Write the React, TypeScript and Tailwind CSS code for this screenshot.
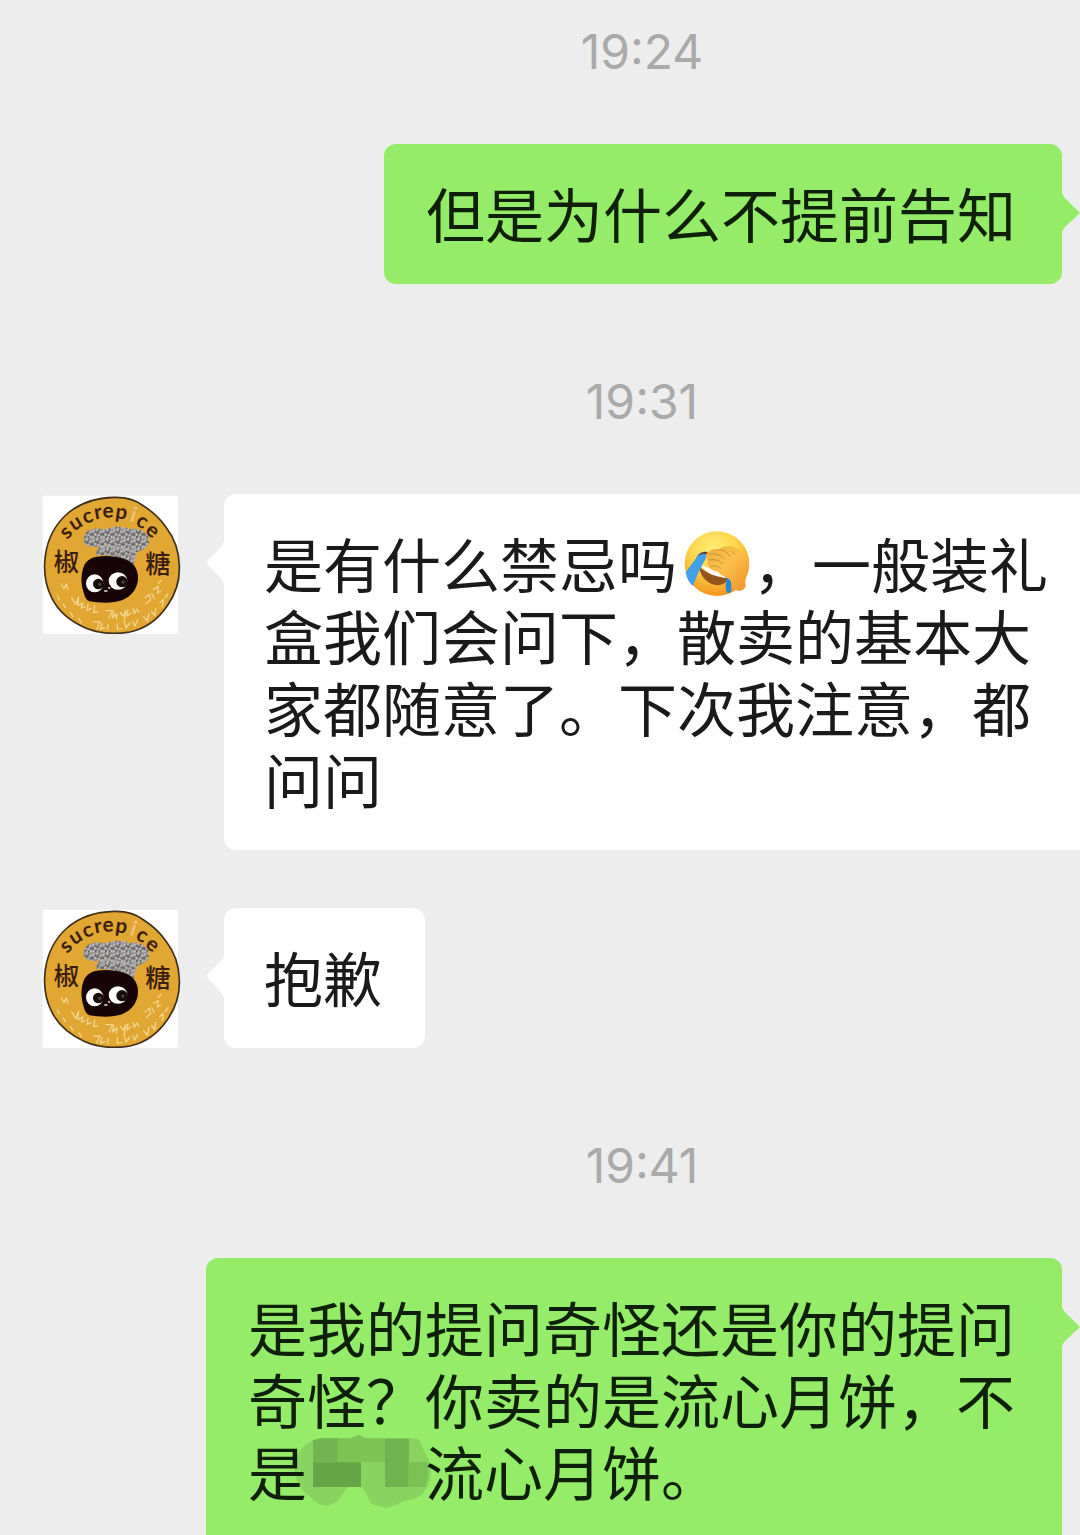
import type { ReactNode } from "react";
import clsx from "clsx";

const ringLetters = [
  { char: "s", x: 104, y: 150, rotate: -42 },
  { char: "u", x: 134, y: 122, rotate: -32 },
  { char: "c", x: 171, y: 102, rotate: -20 },
  { char: "r", x: 203, y: 90, rotate: -10 },
  { char: "e", x: 234, y: 86, rotate: -2 },
  { char: "p", x: 275, y: 90, rotate: 8 },
  { char: "i", x: 312, y: 98, rotate: 18, light: true },
  { char: "c", x: 339, y: 117, rotate: 30 },
  { char: "e", x: 371, y: 145, rotate: 40 },
];

const Avatar = () => (
  <svg viewBox="36 39 420 420" role="img" aria-label="sucrepice 椒糖" className="size-[140px] shrink-0">
    <defs>
      <pattern id="speckle" width="31" height="29" patternUnits="userSpaceOnUse">
        <rect width="31" height="29" fill="#918f8e" />
        <path
          d="M1 2h6v5H1zM12 0h5v4h-5zM23 5h6v5h-6zM7 12h5v6H7zM17 15h7v4h-7zM2 22h5v5H2zM25 21h5v6h-5zM14 23h4v5h-4z"
          fill="#d2d1d3"
        />
        <path
          d="M8 5h5v5H8zM19 2h4v5h-4zM0 13h5v5H0zM14 9h5v5h-5zM25 13h5v5h-5zM9 20h4v6H9zM20 22h4v5h-4z"
          fill="#565254"
        />
      </pattern>
    </defs>
    <rect x="38" y="44" width="406" height="414" rx="6" fill="#fff" />
    <path
      d="M252 49C290 48 318 56 341 75C366 91 388 110 407 137C433 170 447 210 448 254C450 299 437 338 413 373C388 410 349 443 300 453C255 461 208 458 165 440C120 420 85 390 66 352C44 310 40 268 46 224C53 173 75 131 111 99C152 63 200 50 252 49Z"
      fill="#e2a632"
      stroke="#40301b"
      strokeWidth="5"
    />

    {ringLetters.map((letter) => (
      <text
        key={letter.x}
        transform={`translate(${letter.x} ${letter.y}) rotate(${letter.rotate})`}
        textAnchor="middle"
        dominantBaseline="central"
        className={clsx("font-['Lato',sans-serif] text-[62px] font-bold", letter.light ? "fill-[#f3c27c]" : "fill-[#3a200c]")}
      >
        {letter.char}
      </text>
    ))}

    {/* Chef hat */}
    <path
      d="M197 222L205 196C190 201 176 198 165 190C155 172 163 152 181 147C197 138 218 145 230 144C253 134 283 137 298 144C319 138 346 149 354 165C362 183 353 201 335 208L321 213L311 250C277 230 235 220 197 222Z"
      fill="url(#speckle)"
    />
    <path d="M205 196C240 190 286 204 320 216" fill="none" stroke="#b5b1aa" strokeWidth="4" />

    {/* Face */}
    <path
      d="M181 234C204 221 250 224 282 233C307 241 323 260 324 286C326 318 306 347 276 358C249 368 207 366 178 361C163 354 163 338 157 321C153 300 153 279 160 260C164 248 171 239 181 234Z"
      fill="#160406"
    />
    <ellipse cx="194" cy="307" rx="26" ry="27" fill="#fff" />
    <ellipse cx="264" cy="300" rx="28" ry="26" fill="#fff" />
    <circle cx="205" cy="309" r="16" fill="#160a0b" />
    <circle cx="276" cy="302" r="17" fill="#160a0b" />
    <circle cx="209" cy="310" r="5" fill="#4a4445" />
    <circle cx="279" cy="303" r="5" fill="#4a4445" />
    <path d="M224 330h7M236 320l3 2" stroke="#e8dddd" strokeWidth="4" strokeLinecap="round" />

    <text x="109" y="270" textAnchor="middle" className="fill-[#3a200c] font-['Noto_Sans_CJK_SC',sans-serif] text-[76px] font-medium">
      椒
    </text>
    <text x="384" y="275" textAnchor="middle" className="fill-[#3a200c] font-['Noto_Sans_CJK_SC',sans-serif] text-[76px] font-medium">
      糖
    </text>

    {/* Handwriting along the lower rim */}
    <g fill="none" stroke="#f3d68c" strokeWidth="4" strokeLinecap="round" strokeLinejoin="round">
      <path d="M94 309l8 14 7-14 5 17M125 350l12 20 9-22-3 25 13-5M158 366l-4 15 11-4M174 370l-3 18 12-6M194 375l-3 20 11-2" />
      <path d="M228 389h20l-11 22M252 393l-5 18 14-13-2 17M271 394l8 11 9-17-6 34M294 387l-3 18 12-9M309 382l4 16 7-14 7 10" />
      <path d="M345 350l13-10 4 16-14 12M365 338l8 16M370 325l15-8-3 19 10-6M384 307l10-9" />
      <path d="M82 344l6 13M100 369l6 11M122 395l7 12M147 413l7 13M190 422l20 1-10 21M216 428l-5 16 15-4M234 431v15M262 429v16l14-2M284 425l4 16 11-15M309 421l5 15 9-19" />
      <path d="M341 407l11 13 5-23M365 391l9 13 3-21M389 365l11-10-3 22M406 350l8-12" />
    </g>
  </svg>
);

const FacepalmEmoji = () => (
  <svg viewBox="40 28 210 210" role="img" aria-label="捂脸" className="mt-0.5 mr-px ml-[5px] inline-block size-[70px] align-top">
    <defs>
      <radialGradient id="face" cx="45%" cy="28%" r="72%">
        <stop offset="0" stopColor="#fff176" />
        <stop offset="0.5" stopColor="#ffd34b" />
        <stop offset="1" stopColor="#f2951d" />
      </radialGradient>
      <linearGradient id="hand" x1="0" y1="0" x2="1" y2="1">
        <stop offset="0" stopColor="#e9ae3f" />
        <stop offset="0.45" stopColor="#fbc04a" />
        <stop offset="1" stopColor="#f2932b" />
      </linearGradient>
    </defs>
    <circle cx="145" cy="132" r="97" fill="url(#face)" />
    <path d="M92 142C112 159 145 170 176 176C174 192 157 200 137 195C111 189 95 168 92 142Z" fill="#94531a" />
    <path d="M97 134C115 146 145 154 172 166L170 174C142 172 108 162 97 134Z" fill="#fff" />
    <path d="M114 96C99 94 87 103 81 117L51 158C54 176 61 190 73 199C82 176 92 149 111 118Z" fill="#42a0e9" />
    <path d="M174 171L188 184V214C183 222 174 222 173 213C170 199 171 184 174 171Z" fill="#2788d8" />
    <path d="M88 109C93 100 104 95 118 98L114 104C103 101 95 104 88 109Z" fill="#684126" />
    <path
      d="M114 104C118 92 136 86 151 89C168 76 192 76 207 88C228 99 240 119 237 146C234 165 228 183 231 198C230 210 213 217 199 211C188 204 190 190 183 179C171 172 156 167 147 156C136 155 125 149 123 141C116 136 114 127 118 121C112 116 110 109 114 104Z"
      fill="url(#hand)"
    />
    <path
      d="M122 104C139 99 156 107 166 115M122 121C138 117 151 123 161 131M126 141C139 136 149 140 156 146M152 90C168 92 177 100 183 109M192 96l6 7"
      fill="none"
      stroke="#d08d2c"
      strokeWidth="3"
      strokeLinecap="round"
    />
  </svg>
);

const MaskedWord = () => (
  <svg viewBox="228 78 354 180" aria-hidden="true" className="relative -z-10 inline-block h-[60px] w-[118px] overflow-visible align-top">
    <path
      d="M194 146C207 115 240 91 270 88H360L385 77L402 88H555C570 91 574 118 584 134C597 151 604 181 597 209C589 237 578 256 554 268C530 276 514 274 502 286L465 297L421 285L404 249L390 234H350L318 278L290 291L266 287C242 269 220 253 204 229C190 203 187 171 194 146Z"
      fill="#89d461"
    />
    <path d="M246 94L270 88H360L385 77L402 88H535V160H246Z" fill="#7dc457" />
    <path d="M246 94L270 88H320V160H246Z" fill="#72b550" />
    <path d="M246 160H390V234H246Z" fill="#66a546" />
    <path d="M462 90H533V234H462Z" fill="#6fb34f" />
    <path d="M533 160H588C594 188 590 214 583 234H533Z" fill="#79c055" />
  </svg>
);

const TimeStamp = ({ children }: { children: ReactNode }) => (
  <time className="block pt-[86px] pb-[60px] pl-[204px] text-center font-['Inter',sans-serif] text-[48px] leading-[64px] text-[#aaaaaa] first:pt-5">
    {children}
  </time>
);

const bubbleText = "pt-[33px] pb-[35px] text-[59px] leading-[72px]";

const Sent = ({ children, wide = false }: { children: ReactNode; wide?: boolean }) => (
  <div className="flex justify-end pr-[18px] pl-[206px]">
    <div
      className={clsx(
        "relative isolate bg-[#95ec69] pr-[46px] pl-[42px] text-[#102008]",
        bubbleText,
        wide ? "flex-1 rounded-t-xl" : "rounded-xl",
      )}
    >
      {children}
      <svg viewBox="0 0 18 40" aria-hidden="true" className="absolute top-[49px] left-full h-10 w-[18px]">
        <path d="M0 0C1 3 3 5 5 7L18 20L5 32C3 34 1 36 0 39Z" fill="#95ec69" />
      </svg>
    </div>
  </div>
);

const Received = ({ children, wide = false }: { children: ReactNode; wide?: boolean }) => (
  <div className="flex items-start gap-[42px] pl-[42px]">
    <Avatar />
    <div
      className={clsx(
        "relative bg-white pl-[40px] text-[#1a1a1a]",
        bubbleText,
        wide ? "flex-1 rounded-l-xl pr-[30px]" : "rounded-xl pr-[43px]",
      )}
    >
      {children}
      <svg viewBox="0 0 18 42" aria-hidden="true" className="absolute top-[48px] right-full h-[42px] w-[18px]">
        <path d="M18 0C17 3 15 5 13 7L2 18Q0 20 2 23L13 34C15 36 17 39 18 42Z" fill="#fff" />
      </svg>
    </div>
  </div>
);

export default function App() {
  return (
    <main lang="zh-CN" className="h-screen overflow-hidden bg-[#ededed] font-['Noto_Sans_CJK_SC',sans-serif]">
      <TimeStamp>19:24</TimeStamp>
      <Sent>但是为什么不提前告知</Sent>

      <TimeStamp>19:31</TimeStamp>
      <div className="flex flex-col gap-[58px]">
        <Received wide>
          是有什么禁忌吗
          <FacepalmEmoji />
          ，一般装礼盒我们会问下，散卖的基本大家都随意了。下次我注意，都问问
        </Received>
        <Received>抱歉</Received>
      </div>

      <TimeStamp>19:41</TimeStamp>
      <Sent wide>
        是我的提问奇怪还是你的提问奇怪？你卖的是流心月饼，不是
        <MaskedWord />
        流心月饼。
      </Sent>
    </main>
  );
}
